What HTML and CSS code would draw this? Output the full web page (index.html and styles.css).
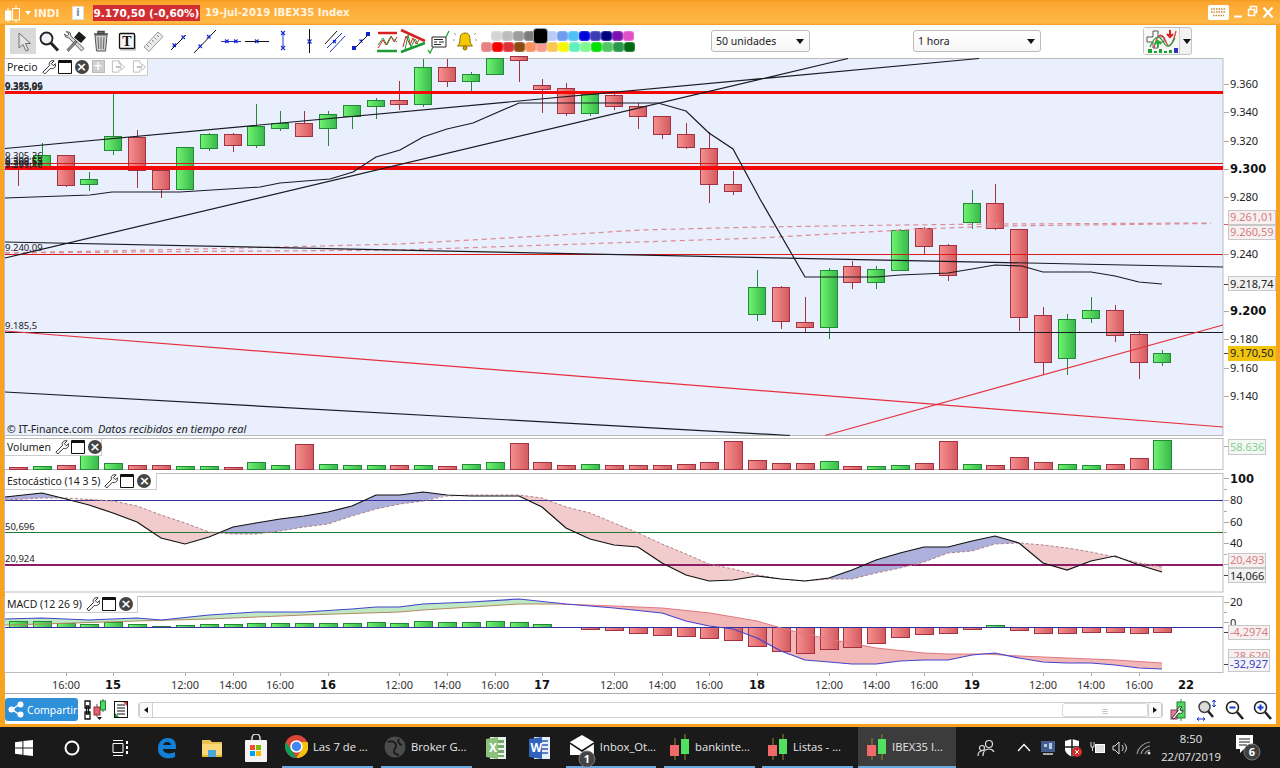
FILE: index.html
```html
<!DOCTYPE html>
<html lang="es">
<head>
<meta charset="utf-8">
<title>IBEX35 Index</title>
<link rel="stylesheet" href="styles.css">
</head>
<body>
<svg class="defs" width="0" height="0" aria-hidden="true">
  <defs>
    <linearGradient id="gu"><stop offset="0" stop-color="#70f470"/><stop offset="1" stop-color="#38b84c"/></linearGradient>
    <linearGradient id="gd"><stop offset="0" stop-color="#f69090"/><stop offset="1" stop-color="#d45a5e"/></linearGradient>
    <symbol id="tcandle" viewBox="0 0 20 26">
      <path d="M5 4v24M15 0v26" stroke="#8a8a30" stroke-width="1" fill="none"/>
      <rect x="0" y="11" width="9" height="11" fill="#f06a6a"/>
      <rect x="11" y="5" width="8" height="15" fill="#52e060"/>
    </symbol>
  </defs>
</svg>
<div class="window">
  <header class="titlebar">
    <svg class="ti-logo" width="16" height="18" viewBox="0 0 16 18"><path d="M0 6h6v9H0zM11 0v3M11 15v3M3 3v3M3 15v2" fill="#fff" stroke="#fff"/><rect x="7.5" y="3.5" width="7" height="11.500" fill="none" stroke="#fff"/></svg>
    <span class="ti-caret"></span>
    <span class="ti-name">INDI</span>
    <span class="ti-info">i</span>
    <span class="ti-price">9.170,50 (-0,60%)</span>
    <span class="ti-text">19-jul-2019 IBEX35 Index</span>
    <span class="ti-right">
      <svg width="21" height="15" viewBox="0 0 21 15"><rect width="21" height="15" rx="2" fill="#fff"/><path d="M3 4h15M3 7h15M5 10.500h11" stroke="#c98a30" stroke-width="1.500" stroke-dasharray="1.500 1"/></svg>
      <svg width="10" height="15" viewBox="0 0 10 15"><path d="M1 11.500h8" stroke="#fff" stroke-width="2"/></svg>
      <svg width="11" height="15" viewBox="0 0 11 15"><path d="M3.500 4.500V1.500h6v6H7M1.500 4.500h6v6h-6z" fill="none" stroke="#fff" stroke-width="1.500"/></svg>
      <svg width="12" height="15" viewBox="0 0 12 15"><path d="M1.500 2.500l9 10M10.500 2.500l-9 10" stroke="#fff" stroke-width="2.200"/></svg>
    </span>
  </header>

  <nav class="toolbar">
    <span class="tool sel"><svg viewBox="0 0 26 26"><path d="M9 5v15l4-3.500 3 6.500 2.500-1-3-6.500h5z" fill="#e4e4e4" stroke="#6f6f6f"/></svg></span>
    <span class="tool"><svg viewBox="0 0 26 26"><circle cx="10.500" cy="10.500" r="6" fill="#eef2f8" stroke="#222" stroke-width="1.800"/><path d="M15 15l7 7.500" stroke="#222" stroke-width="3"/></svg></span>
    <span class="tool"><svg viewBox="0 0 26 26"><path d="M4 3.500l4 1 1 3.500 13 12.500-2.500 2.500L7 10l-3.500-1-1-3 2.500 2 2-2z" fill="#d8d8d8" stroke="#555" stroke-width=".9"/><path d="M5 21.500l8.500-9 1.500 1.500-8.500 9.500z" fill="#8a8a8a" stroke="#444" stroke-width=".7"/><path d="M12 9.500l5-6 7 6-5 5.500z" fill="#1c1c1c"/></svg></span>
    <span class="tool"><svg viewBox="0 0 26 26"><path d="M7 7h12l-1.500 16h-9z" fill="#d0d0d0" stroke="#555"/><path d="M6 6h14M10 3.500h6v2h-6z" stroke="#444" stroke-width="1.500" fill="#999"/><path d="M10 9l.7 12M13 9v12M16 9l-.7 12" stroke="#666"/></svg></span>
    <span class="tool"><svg viewBox="0 0 26 26"><rect x="5.500" y="5.500" width="15" height="15" rx="1" fill="#f6f6f6" stroke="#111" stroke-width="1.300"/><path d="M21.500 7v15h-15" fill="none" stroke="#aaa"/><text class="ti-t" x="13" y="18">T</text></svg></span>
    <span class="tool"><svg viewBox="0 0 26 26"><path d="M4 19L18 4l5 4.500L9 23.500z" fill="#ececec" stroke="#999"/><path d="M7 17l2 2M9.500 14.500l2 2M12 12l2 2M14.500 9.500l2 2M17 7l2 2" stroke="#888"/></svg></span>
    <span class="tool"><svg viewBox="0 0 26 26"><path d="M5 22L20 7" stroke="#111"/><path class="bx" d="M6.500 15.500l3.500 3.500M10 15.500L6.500 19M15.500 7.500l3.500 3.500M19 7.500L15.500 11"/></svg></span>
    <span class="tool"><svg viewBox="0 0 26 26"><path d="M2 25L24 2" stroke="#111"/><path class="bx" d="M6.500 16.500l3.500 3.500M10 16.500L6.500 20M15 7l3.500 3.500M18.500 7L15 10.500"/></svg></span>
    <span class="tool"><svg viewBox="0 0 26 26"><path d="M3 13.500h20" stroke="#2233cc"/><path class="bx" d="M7 11.500l3.500 3.500M10.500 11.500L7 15M16 11.500l3.500 3.500M19.500 11.500L16 15"/></svg></span>
    <span class="tool"><svg viewBox="0 0 26 26"><path d="M1 13.500h24" stroke="#111"/><path class="bx" d="M11 11.500l3.500 3.500M14.500 11.500L11 15"/></svg></span>
    <span class="tool"><svg viewBox="0 0 26 26"><path d="M13 6v14" stroke="#2233cc"/><path class="bx" d="M11 3l4 4M15 3l-4 4M11 18l4 4M15 18l-4 4"/></svg></span>
    <span class="tool"><svg viewBox="0 0 26 26"><path d="M13.500 1v24" stroke="#111"/><path class="bx" d="M11.500 11.500l4 4M15.500 11.500l-4 4"/></svg></span>
    <span class="tool"><svg viewBox="0 0 26 26"><path d="M3 16L15 3" stroke="#111"/><path d="M8 24L23 8M5 20L20 5" stroke="#2233cc"/><path class="bx" d="M11 12l3 3M14 12l-3 3"/></svg></span>
    <span class="tool"><svg viewBox="0 0 26 26"><path d="M7 20L20 7" stroke="#111"/><rect x="4" y="18" width="4" height="4" fill="#1122cc"/><rect x="18" y="4" width="4" height="4" fill="#1122cc"/><path class="bx" d="M11.500 11.500l3 3M14.500 11.500l-3 3"/></svg></span>
    <span class="tool"><svg viewBox="0 0 26 26"><path d="M4 5h19" stroke="#d82020" stroke-width="2.500"/><path d="M3 23h20" stroke="#1c9a34" stroke-width="2.500"/><path d="M4 20l5-8 3 5 5-9 3 6 3-5" fill="none" stroke="#d82020"/><path d="M4 17l5-7 4 7 4-8 6 5" fill="none" stroke="#1c9a34"/></svg></span>
    <span class="tool"><svg viewBox="0 0 26 26"><path d="M1 2l24 11" stroke="#d82020" stroke-width="2.500"/><path d="M1 24l24-9" stroke="#1c9a34" stroke-width="2.500"/><path d="M3 19l3-11 4 9 3-7 3 6 3-4" fill="none" stroke="#d82020"/><path d="M5 22l3-15 3 12 4-8 3 5" fill="none" stroke="#1c9a34"/></svg></span>
    <span class="tool"><svg viewBox="0 0 26 26"><path d="M6 9h14v10H6z" fill="#fff" stroke="#222"/><path d="M8 11.500h9M8 14h3M13 14h5M8 16.500h7" stroke="#222"/><path d="M2 22l2 3 3-6M20 9l3-6" fill="none" stroke="#22a030" stroke-width="1.300"/></svg></span>
    <span class="tool"><svg viewBox="0 0 26 26"><path d="M13 5c-4 0-5 3-5 7 0 3-1 4-2.500 6h15c-1.500-2-2.500-3-2.500-6 0-4-1-7-5-7z" fill="#f5c800" stroke="#8a7000"/><circle cx="13" cy="20" r="2" fill="#d8a000" stroke="#8a7000"/><path d="M4 7l-2-2M22 7l2-2M3 12H1M23 12h2" stroke="#999"/></svg></span>

    <div class="palette">
      <div class="pal-row pal-top">
        <i class="c1"></i><i class="c2"></i><i class="c3"></i><i class="c4"></i><i class="c5"></i><i class="c6"></i><i class="c7"></i><i class="c8"></i><i class="c9"></i><i class="c10"></i><i class="c11"></i><i class="c12"></i><i class="c13"></i>
      </div>
      <div class="pal-row">
        <i class="d1"></i><i class="d2"></i><i class="d3"></i><i class="d4"></i><i class="d5"></i><i class="d6"></i><i class="d7"></i><i class="d8"></i><i class="d9"></i><i class="d10"></i><i class="d11"></i><i class="d12"></i><i class="d13"></i><i class="d14"></i>
      </div>
    </div>

    <span class="select sel-units">50 unidades<b></b></span>
    <span class="select sel-time">1 hora<b></b></span>
    <span class="indic-btn">
      <svg width="35" height="26" viewBox="0 0 35 26"><path d="M3 9h6V3h5v6h6v5h-6v6H9v-6H3z" fill="#fff" stroke="#555"/><path d="M10 20c4-18 9-14 12-6s7 2 10-11" fill="none" stroke="#d84040" stroke-width="1.300"/><path d="M6 19C12 5 16 8 20 15s8 1 11-5" fill="none" stroke="#30a040" stroke-width="1.300"/><path d="M14 19v-5M11 16l3-3 3 3" stroke="#18b030" stroke-width="2" fill="none"/><path d="M26 2v6M23 6l3 3 3-3" stroke="#d82020" stroke-width="2" fill="none"/><path d="M4 21h4v4H4zM10 23h3v2h-3zM15 21h3v4h-3zM20 23h3v2h-3zM25 22h3v3h-3z" fill="#18a030"/><path d="M30 20h4v5h-4z" fill="#3030c0"/></svg>
      <b></b>
    </span>
  </nav>

  <div class="panes">
    <svg class="pane" width="1271" height="378" viewBox="5 58 1271 378">
      <rect class="plot" x="4.500" y="58.500" width="1218.500" height="377"/>
      <path class="wick-d" d="M18.500 167v19M66.500 155v32M137.500 130v58M161.500 170v28M233.500 133v19M304.500 111v25M399.500 81v29M447.500 59v28M519.500 59v23M542.500 79v34M566.500 83v33M614.500 93v17M638.500 103v26M662.500 116v23M686.500 123v26M709.500 132v71M733.500 171v24M781.500 286v43M805.500 297v35M852.500 261v28M924.500 227v27M948.500 244v37M995.500 184v46M1019.500 229v102M1043.500 307v68M1115.500 305v37M1139.500 331v48"/>
      <path class="wick-u" d="M42.500 143v23M89.500 172v19M113.500 93v62M185.500 147v43M209.500 133v18M256.500 104v44M280.500 111v20M328.500 111v35M352.500 105v24M376.500 98v21M423.500 59v48M471.500 72v19M495.500 59v15M590.500 94v22M757.500 270v51M829.500 268v71M876.500 266v23M900.500 229v41M972.500 190v39M1067.500 314v61M1091.500 297v26M1162.500 350v16"/>
      <g class="bars up" fill="url(#gu)">
        <rect x="33.500" y="155.500" width="17" height="11"/><rect x="80.500" y="179.500" width="17" height="5"/><rect x="104.500" y="136.500" width="17" height="14"/><rect x="176.500" y="147.500" width="17" height="42"/><rect x="200.500" y="134.500" width="17" height="14"/><rect x="247.500" y="126.500" width="17" height="19"/><rect x="271.500" y="123.500" width="17" height="5"/><rect x="319.500" y="114.500" width="17" height="14"/><rect x="343.500" y="105.500" width="17" height="11"/><rect x="367.500" y="100.500" width="17" height="6"/><rect x="414.500" y="67.500" width="17" height="37"/><rect x="462.500" y="74.500" width="17" height="7"/><rect x="486.500" y="58.500" width="17" height="16"/><rect x="581.500" y="94.500" width="17" height="19"/><rect x="748.500" y="287.500" width="17" height="27"/><rect x="820.500" y="270.500" width="17" height="57"/><rect x="867.500" y="269.500" width="17" height="13"/><rect x="891.500" y="230.500" width="17" height="40"/><rect x="963.500" y="203.500" width="17" height="19"/><rect x="1058.500" y="319.500" width="17" height="39"/><rect x="1082.500" y="310.500" width="17" height="8"/><rect x="1153.500" y="353.500" width="17" height="9"/>
      </g>
      <g class="bars dn" fill="url(#gd)">
        <rect x="57.500" y="155.500" width="17" height="30"/><rect x="128.500" y="137.500" width="17" height="33"/><rect x="152.500" y="170.500" width="17" height="19"/><rect x="224.500" y="134.500" width="17" height="11"/><rect x="295.500" y="123.500" width="17" height="13"/><rect x="390.500" y="100.500" width="17" height="4"/><rect x="438.500" y="67.500" width="17" height="14"/><rect x="510.500" y="56.500" width="17" height="4"/><rect x="533.500" y="85.500" width="17" height="4"/><rect x="557.500" y="88.500" width="17" height="25"/><rect x="605.500" y="95.500" width="17" height="11"/><rect x="629.500" y="106.500" width="17" height="10"/><rect x="653.500" y="116.500" width="17" height="18"/><rect x="677.500" y="134.500" width="17" height="13"/><rect x="700.500" y="148.500" width="17" height="36"/><rect x="724.500" y="184.500" width="17" height="7"/><rect x="772.500" y="287.500" width="17" height="34"/><rect x="796.500" y="322.500" width="17" height="5"/><rect x="843.500" y="266.500" width="17" height="16"/><rect x="915.500" y="228.500" width="17" height="18"/><rect x="939.500" y="245.500" width="17" height="30"/><rect x="986.500" y="203.500" width="17" height="25"/><rect x="1010.500" y="229.500" width="17" height="88"/><rect x="1034.500" y="315.500" width="17" height="47"/><rect x="1106.500" y="310.500" width="17" height="25"/><rect x="1130.500" y="334.500" width="17" height="28"/>
      </g>
      <path class="dash" d="M5 253L200 249 400 244 560 235 640 230 760 227 900 225 1000 224 1211 223"/>
      <path class="dash" d="M5 253L400 250 760 238 920 229 1000 226 1211 223.500"/>
      <path class="thin-red" d="M5 163h1218M5 254.500h1218"/>
      <path class="red-thick r3" d="M5 92.500h1218"/>
      <path class="red-thick r4" d="M5 167.500h1218"/>
      <path class="thin-blk crisp" d="M5 332.500h1218"/>
      <path class="thin-blk" d="M5 148.500L979 58.500M5 258L848 58.500M5 242L1223 267M5 392L790 435.500"/>
      <path class="thin-blk" d="M5 198L90 195 112 192 180 192 260 187 280 183 330 179 353 172 376 157 400 150 423 137 447 129 473 123 519 103 590 103 658 103 686 111 709 133 733 149 760 199 805 277 876 277 900 275 948 273 972 269 995 265 1022 266 1043 272 1091 272 1115 276 1139 282 1162 284"/>
      <path class="thin-red2" d="M5 331L1223 427M825 435.500L1223 325"/>
      <text class="lb" x="5" y="90">9.353,89</text><text class="lb" x="5" y="89">9.385,06</text><text class="lb" x="5" y="90">9.315,95</text>
      <text class="lb" x="5" y="159">9.305,26</text>
      <text class="lb" x="5" y="164">9.300,55</text><text class="lb" x="5" y="165">9.298,62</text><text class="lb" x="5" y="167">9.301,17</text><text class="lb" x="5" y="168">9.299,40</text>
      <text class="lb" x="5" y="251">9.240,09</text>
      <text class="lb" x="5" y="329">9.185,5</text>
      <text class="ft" x="7" y="433">© IT-Finance.com</text><text class="ft it" x="98" y="433">Datos recibidos en tiempo real</text>
      <path class="tk" d="M1224 84.500h5M1224 112.500h5M1224 141.500h5M1224 169.500h5M1224 197.500h5M1224 254.500h5M1224 311.500h5M1224 339.500h5M1224 368.500h5M1224 396.500h5"/>
      <path class="tk-red" d="M1224 224.500h4"/><path class="tk-dk" d="M1224 284.500h4M1224 353.500h4"/>
      <text class="ax" x="1230" y="88">9.360</text><text class="ax" x="1230" y="116">9.340</text><text class="ax" x="1230" y="145">9.320</text><text class="ax-b" x="1230" y="173">9.300</text><text class="ax" x="1230" y="201">9.280</text><text class="ax" x="1230" y="258">9.240</text><text class="ax-b" x="1230" y="315">9.200</text><text class="ax" x="1230" y="343">9.180</text><text class="ax" x="1230" y="372">9.160</text><text class="ax" x="1230" y="400">9.140</text>
      <rect class="box-r" x="1228.500" y="210.500" width="47" height="14"/><text class="ax rd" x="1230" y="221">9.261,01</text>
      <rect class="box-r" x="1228.500" y="225.500" width="47" height="14"/><text class="ax rd" x="1230" y="236">9.260,59</text>
      <rect class="box-g" x="1228.500" y="276.500" width="47" height="14"/><text class="ax" x="1230" y="288">9.218,74</text>
      <rect class="box-y" x="1228" y="346" width="48" height="15"/><text class="ax" x="1230" y="357">9.170,50</text>
    </svg>

    <svg class="pane" width="1271" height="33" viewBox="5 438 1271 33">
      <rect class="plot white" x="4.500" y="438.500" width="1218.500" height="31"/>
      <g class="bars up" fill="url(#gu)"><rect x="33.500" y="466.500" width="18" height="3"/><rect x="80.500" y="454.500" width="18" height="15"/><rect x="104.500" y="463.500" width="18" height="6"/><rect x="176.500" y="466.500" width="18" height="3"/><rect x="200.500" y="466.500" width="18" height="3"/><rect x="247.500" y="462.500" width="18" height="7"/><rect x="271.500" y="465.500" width="18" height="4"/><rect x="319.500" y="464.500" width="18" height="5"/><rect x="343.500" y="465.500" width="18" height="4"/><rect x="367.500" y="465.500" width="18" height="4"/><rect x="414.500" y="465.500" width="18" height="4"/><rect x="462.500" y="464.500" width="18" height="5"/><rect x="486.500" y="462.500" width="18" height="7"/><rect x="581.500" y="464.500" width="18" height="5"/><rect x="820.500" y="461.500" width="18" height="8"/><rect x="867.500" y="466.500" width="18" height="3"/><rect x="891.500" y="465.500" width="18" height="4"/><rect x="963.500" y="464.500" width="18" height="5"/><rect x="1058.500" y="464.500" width="18" height="5"/><rect x="1082.500" y="465.500" width="18" height="4"/><rect x="1153.500" y="440.500" width="18" height="29"/></g>
      <g class="bars dn" fill="url(#gd)"><rect x="9.500" y="467.500" width="18" height="2"/><rect x="57.500" y="465.500" width="18" height="4"/><rect x="128.500" y="465.500" width="18" height="4"/><rect x="152.500" y="465.500" width="18" height="4"/><rect x="224.500" y="467.500" width="18" height="2"/><rect x="295.500" y="444.500" width="18" height="25"/><rect x="390.500" y="465.500" width="18" height="4"/><rect x="438.500" y="466.500" width="18" height="3"/><rect x="510.500" y="443.500" width="18" height="26"/><rect x="533.500" y="462.500" width="18" height="7"/><rect x="557.500" y="465.500" width="18" height="4"/><rect x="605.500" y="465.500" width="18" height="4"/><rect x="629.500" y="465.500" width="18" height="4"/><rect x="653.500" y="465.500" width="18" height="4"/><rect x="677.500" y="464.500" width="18" height="5"/><rect x="700.500" y="462.500" width="18" height="7"/><rect x="724.500" y="441.500" width="18" height="28"/><rect x="748.500" y="460.500" width="18" height="9"/><rect x="772.500" y="463.500" width="18" height="6"/><rect x="796.500" y="463.500" width="18" height="6"/><rect x="843.500" y="466.500" width="18" height="3"/><rect x="915.500" y="463.500" width="18" height="6"/><rect x="939.500" y="441.500" width="18" height="28"/><rect x="986.500" y="465.500" width="18" height="4"/><rect x="1010.500" y="457.500" width="18" height="12"/><rect x="1034.500" y="462.500" width="18" height="7"/><rect x="1106.500" y="464.500" width="18" height="5"/><rect x="1130.500" y="458.500" width="18" height="11"/></g>
      <path class="tk" d="M1224 446.500h5"/>
      <rect class="box-gr" x="1228.500" y="439.500" width="37" height="15"/><text class="ax gn" x="1230" y="451">58.636</text>
    </svg>

    <svg class="pane" width="1271" height="120" viewBox="5 473 1271 120">
      <rect class="plot white" x="4.500" y="473.500" width="1218.500" height="118.500"/>
      <polygon class="f-blue" points="5,497 42,493 66,499 72,500 66,498 42,498 5,500"/>
      <polygon class="f-pink" points="70,500 89,505 113,513 137,522 161,538 185,544 209,537 220,533 209,532 185,523 161,515 137,506 113,501 89,499"/>
      <polygon class="f-blue" points="220,533 233,527 256,523 280,519 304,516 328,512 352,506 376,495 400,495 423,492 447,495 423,501 400,504 376,509 352,516 328,524 304,527 280,531 256,534 233,534"/>
      <polygon class="f-pink" points="519,496 542,507 566,528 590,539 614,545 638,547 662,563 686,575 709,581 733,580 757,576 781,579 805,581 781,579 757,575 733,569 709,564 686,554 662,544 638,533 614,523 590,513 566,507 542,498 519,495"/>
      <polygon class="f-blue" points="805,581 829,578 852,570 876,560 900,553 924,547 948,547 972,541 995,536 1019,543 995,544 972,551 948,553 924,562 900,568 876,573 852,579 829,579"/>
      <polygon class="f-pink" points="1019,543 1043,563 1067,570 1091,561 1115,556 1139,565 1162,572 1162,567 1139,563 1115,557 1091,552 1067,548 1043,545"/>
      <path class="h-blue" d="M5 500.500h1218"/><path class="h-green" d="M5 532.500h1218"/><path class="h-purple" d="M5 565h1218"/>
      <path class="d-line" d="M5 500L42 498 66 498 113 501 137 506 161 515 185 523 209 532 233 534 256 534 280 531 304 527 328 524 352 516 376 509 400 504 423 501 447 496 471 495 519 495 542 498 566 507 590 513 614 523 638 533 662 544 686 554 709 564 733 569 757 575 781 579 805 581 829 579 852 579 876 573 900 568 924 562 948 553 972 551 995 544 1019 543 1043 545 1067 548 1091 552 1115 557 1139 563 1162 567"/>
      <path class="k-line" d="M5 497L42 493 66 499 89 505 113 513 137 522 161 538 185 544 209 537 233 527 256 523 280 519 304 516 328 512 352 506 376 495 400 495 423 492 447 495 471 496 519 496 542 507 566 528 590 539 614 545 638 547 662 563 686 575 709 581 733 580 757 576 781 579 805 581 829 578 852 570 876 560 900 553 924 547 948 547 972 541 995 536 1019 543 1043 563 1067 570 1091 561 1115 556 1139 565 1162 572"/>
      <text class="lb" x="5" y="530">50,696</text><text class="lb" x="5" y="562">20,924</text>
      <path class="tk" d="M1224 478.500h5M1224 489.500h3M1224 500.500h5M1224 511.500h3M1224 522.500h5M1224 532.500h3M1224 543.500h5M1224 554.500h3M1224 564.500h5"/>
      <path class="tk-dk" d="M1224 575.500h4"/>
      <text class="ax-b" x="1230" y="483">100</text><text class="ax" x="1230" y="504">80</text><text class="ax" x="1230" y="526">60</text><text class="ax" x="1230" y="547">40</text>
      <rect class="box-r" x="1228.500" y="553.500" width="37" height="14"/><text class="ax rd" x="1230" y="564">20,493</text>
      <rect class="box-g" x="1228.500" y="568.500" width="37" height="14"/><text class="ax" x="1230" y="580">14,066</text>
    </svg>

    <svg class="pane" width="1271" height="77" viewBox="5 596 1271 77">
      <rect class="plot white" x="4.500" y="596.500" width="1218.500" height="76"/>
      <polygon class="f-green" points="5,619 42,618 89,620 137,618 161,620 209,615 256,612 304,612 352,609 376,607 399,607 423,604 471,602 519,599 560,604 519,604 423,610 399,612 304,615 209,619 137,621 42,624 5,625"/>
      <polygon class="f-salmon" points="560,604 614,606 662,608 710,613 757,621 781,628 805,634 829,639 876,648 924,653 948,654 985,654 1019,656 1043,657 1115,660 1162,663 1162,669 1139,668 1115,665 1091,663 1067,663 1043,662 1019,658 995,653 972,655 948,660 924,660 900,661 876,664 852,664 829,662 805,660 781,651 757,638 733,629 709,626 686,621 662,613 614,608 566,604"/>
      <g class="bars up" fill="url(#gu)"><rect x="9.500" y="621.500" width="18" height="6"/><rect x="33.500" y="621.500" width="18" height="6"/><rect x="57.500" y="623.500" width="18" height="4"/><rect x="80.500" y="624.500" width="18" height="3"/><rect x="104.500" y="622.500" width="18" height="5"/><rect x="128.500" y="624.500" width="18" height="3"/><rect x="152.500" y="626.500" width="18" height="1"/><rect x="176.500" y="625.500" width="18" height="2"/><rect x="200.500" y="624.500" width="18" height="3"/><rect x="224.500" y="624.500" width="18" height="3"/><rect x="247.500" y="623.500" width="18" height="4"/><rect x="271.500" y="623.500" width="18" height="4"/><rect x="295.500" y="623.500" width="18" height="4"/><rect x="319.500" y="623.500" width="18" height="4"/><rect x="343.500" y="623.500" width="18" height="4"/><rect x="367.500" y="622.500" width="18" height="5"/><rect x="390.500" y="623.500" width="18" height="4"/><rect x="414.500" y="621.500" width="18" height="6"/><rect x="438.500" y="622.500" width="18" height="5"/><rect x="462.500" y="622.500" width="18" height="5"/><rect x="486.500" y="621.500" width="18" height="6"/><rect x="510.500" y="622.500" width="18" height="5"/><rect x="533.500" y="624.500" width="18" height="3"/><rect x="986.500" y="625.500" width="18" height="2"/></g>
      <g class="bars dn" fill="url(#gd)"><rect x="581.500" y="627.500" width="18" height="2"/><rect x="605.500" y="627.500" width="18" height="3"/><rect x="629.500" y="627.500" width="18" height="6"/><rect x="653.500" y="627.500" width="18" height="8"/><rect x="677.500" y="627.500" width="18" height="9"/><rect x="700.500" y="627.500" width="18" height="11"/><rect x="724.500" y="627.500" width="18" height="13"/><rect x="748.500" y="627.500" width="18" height="19"/><rect x="772.500" y="627.500" width="18" height="24"/><rect x="796.500" y="627.500" width="18" height="26"/><rect x="820.500" y="627.500" width="18" height="22"/><rect x="843.500" y="627.500" width="18" height="20"/><rect x="867.500" y="627.500" width="18" height="16"/><rect x="891.500" y="627.500" width="18" height="10"/><rect x="915.500" y="627.500" width="18" height="7"/><rect x="939.500" y="627.500" width="18" height="6"/><rect x="963.500" y="627.500" width="18" height="2"/><rect x="1010.500" y="627.500" width="18" height="3"/><rect x="1034.500" y="627.500" width="18" height="6"/><rect x="1058.500" y="627.500" width="18" height="6"/><rect x="1082.500" y="627.500" width="18" height="5"/><rect x="1106.500" y="627.500" width="18" height="5"/><rect x="1130.500" y="627.500" width="18" height="6"/><rect x="1153.500" y="627.500" width="18" height="5"/></g>
      <path class="h-blue" d="M5 627.500h1218"/>
      <path class="sig" d="M5 625L42 624 137 621 209 619 304 615 399 612 423 610 519 604 560 604"/>
      <path class="sig2" d="M560 604L614 606 662 608 710 613 757 621 781 628 805 634 829 639 876 648 924 653 948 654 985 654 1019 656 1043 657 1115 660 1162 663"/>
      <path class="macd" d="M5 619L42 618 89 620 137 618 161 620 209 615 256 612 304 612 352 609 376 607 399 607 423 604 471 602 519 599 566 604 614 608 662 613 686 621 709 626 733 629 757 638 781 651 805 660 829 662 852 664 876 664 900 661 924 660 948 660 972 655 995 653 1019 658 1043 662 1067 663 1091 663 1115 665 1139 668 1162 669"/>
      <path class="tk" d="M1224 602.500h5M1224 612.500h3M1224 622.500h5"/>
      <path class="tk-dk" d="M1224 632.500h4M1224 664.500h4"/>
      <text class="ax" x="1230" y="606">20</text><text class="ax" x="1230" y="627">0</text>
      <rect class="box-r" x="1228.500" y="625.500" width="41" height="14"/><text class="ax rd" x="1230" y="636">-4,2974</text>
      <rect class="box-r" x="1228.500" y="649.500" width="41" height="14"/><text class="ax rd" x="1230" y="660">-28,620</text>
      <rect class="box-b" x="1228.500" y="657.500" width="41" height="14"/><text class="ax bl" x="1230" y="668">-32,927</text>
    </svg>

    <svg class="pane" width="1271" height="21" viewBox="5 673 1271 21">
      <path class="tk" d="M66.500 673v3M113.500 673v3M185.500 673v3M233.500 673v3M280.500 673v3M328.500 673v3M399.500 673v3M447.500 673v3M495.500 673v3M542.500 673v3M614.500 673v3M662.500 673v3M709.500 673v3M757.500 673v3M829.500 673v3M876.500 673v3M924.500 673v3M972.500 673v3M1043.500 673v3M1091.500 673v3M1139.500 673v3"/>
      <path class="tk" d="M5 693.500h1271"/>
      <g class="tm"><text x="66" y="689">16:00</text><text x="185" y="689">12:00</text><text x="233" y="689">14:00</text><text x="280" y="689">16:00</text><text x="399" y="689">12:00</text><text x="447" y="689">14:00</text><text x="495" y="689">16:00</text><text x="614" y="689">12:00</text><text x="662" y="689">14:00</text><text x="709" y="689">16:00</text><text x="829" y="689">12:00</text><text x="876" y="689">14:00</text><text x="924" y="689">16:00</text><text x="1043" y="689">12:00</text><text x="1091" y="689">14:00</text><text x="1139" y="689">16:00</text></g>
      <g class="tmb"><text x="113" y="689">15</text><text x="328" y="689">16</text><text x="542" y="689">17</text><text x="757" y="689">18</text><text x="972" y="689">19</text><text x="1186" y="689">22</text></g>
    </svg>

    <div class="overlays">
      <div class="plabel pl-price">Precio
        <svg class="wr" viewBox="0 0 16 16"><path d="M2 14l7-7c-1-3 1-6 5-5l-3 3 2 2 3-2c0 4-3 6-6 5l-6 6z" fill="#fff" stroke="#222"/></svg>
        <span class="win"></span><span class="cl">×</span>
        <span class="gr">+</span>
        <svg class="gp" viewBox="0 0 16 16"><path d="M2 2h7v3h2L9 2M2 2v12h7v-3M6 8h5V5l4 3.500-4 3.500V9H6z" fill="#fff" stroke="#bbb"/></svg>
        <svg class="gp" viewBox="0 0 16 16"><path d="M2 2h7v3M2 2v12h7v-3M6 8h5V5l4 3.500-4 3.500V9H6z" fill="#fff" stroke="#bbb"/></svg>
      </div>
      <div class="plabel pl-vol">Volumen
        <svg class="wr" viewBox="0 0 16 16"><path d="M2 14l7-7c-1-3 1-6 5-5l-3 3 2 2 3-2c0 4-3 6-6 5l-6 6z" fill="#fff" stroke="#222"/></svg>
        <span class="win"></span><span class="cl">×</span>
      </div>
      <div class="plabel pl-sto">Estocástico (14 3 5)
        <svg class="wr" viewBox="0 0 16 16"><path d="M2 14l7-7c-1-3 1-6 5-5l-3 3 2 2 3-2c0 4-3 6-6 5l-6 6z" fill="#fff" stroke="#222"/></svg>
        <span class="win"></span><span class="cl">×</span>
      </div>
      <div class="plabel pl-mac">MACD (12 26 9)
        <svg class="wr" viewBox="0 0 16 16"><path d="M2 14l7-7c-1-3 1-6 5-5l-3 3 2 2 3-2c0 4-3 6-6 5l-6 6z" fill="#fff" stroke="#222"/></svg>
        <span class="win"></span><span class="cl">×</span>
      </div>
    </div>
  </div>

  <footer class="footer">
    <span class="share">
      <svg width="16" height="17" viewBox="0 0 16 17"><path d="M12 3L4 8.500 12 14" fill="none" stroke="#fff" stroke-width="1.500"/><circle cx="12.500" cy="3.500" r="3" fill="#fff"/><circle cx="3.500" cy="8.500" r="3" fill="#fff"/><circle cx="12.500" cy="13.500" r="3" fill="#fff"/></svg>
      Compartir
    </span>
    <svg class="fi-link" width="24" height="22" viewBox="0 0 24 22"><path d="M3 2h5v7H3zM3 13h5v7H3zM4.500 7h2v8h-2z" fill="#fff" stroke="#111" stroke-width="1.300"/><path d="M15 5v13M21 0v13" stroke="#555"/><rect x="12" y="8" width="6" height="8" fill="#e06070" stroke="#903030"/><rect x="18.500" y="2" width="5" height="9" fill="#50d860" stroke="#208030"/><path d="M15 18h5l-2.500 3z" fill="#111"/></svg>
    <svg class="fi-doc" width="16" height="17" viewBox="0 0 16 17"><rect x=".5" y=".5" width="13" height="16" fill="#fff" stroke="#111"/><path d="M3 4h8M3 7h8M3 10h8M3 13h8" stroke="#111"/><path d="M9 1l4 0 0 4z" fill="#d84040"/><path d="M1 16v-4l4 4z" fill="#209040"/></svg>
    <div class="scroll">
      <span class="sb-btn"><i class="tri-l"></i></span>
      <span class="sb-track"></span>
      <span class="sb-thumb"><i>≡</i></span>
      <span class="sb-btn"><i class="tri-r"></i></span>
    </div>
    <svg class="fi-c" width="16" height="22" viewBox="0 0 16 22"><path d="M11 0v22" stroke="#20a030"/><rect x="7" y="3" width="8" height="16" fill="#50d860" stroke="#208030"/><rect x="1" y="11" width="6" height="9" fill="#e08090" stroke="#804060"/><path d="M2 19l6-7c-1-3 1-5 4-4l-2 2 1 2 2-1c0 3-2 4-4 3l-5 6z" fill="#fff" stroke="#333"/></svg>
    <svg class="fi-m" width="20" height="22" viewBox="0 0 20 22"><circle cx="7.500" cy="8" r="5.500" fill="#dcdcdc" stroke="#444" stroke-width="1.500"/><path d="M11 12l5 6" stroke="#222" stroke-width="2.500"/><path d="M17 1v7M15.300 3L17 1l1.700 2M15.300 6L17 8l1.700-2M0 20h8M2 18.300L0 20l2 1.700M6 18.300L8 20l-2 1.700" stroke="#1c2ccc" fill="none"/></svg>
    <svg class="fi-z" width="19" height="20" viewBox="0 0 19 20"><circle cx="7.500" cy="7.500" r="6" fill="#fff" stroke="#222" stroke-width="1.600"/><path d="M12 12l6 7" stroke="#222" stroke-width="2.600"/><path d="M4.500 7.500h6" stroke="#1c3cd0" stroke-width="2"/></svg>
    <svg class="fi-z2" width="19" height="20" viewBox="0 0 19 20"><circle cx="7.500" cy="7.500" r="6" fill="#fff" stroke="#222" stroke-width="1.600"/><path d="M12 12l6 7" stroke="#222" stroke-width="2.600"/><path d="M4.500 7.500h6M7.500 4.500v6" stroke="#1c3cd0" stroke-width="2"/></svg>
  </footer>
</div>

<div class="taskbar">
  <span class="tb w48"><svg width="18" height="16" viewBox="0 0 18 16"><path d="M0 2.200L7.400 1.200V7.500H0zM8.400 1L18 0V7.500H8.400zM0 8.500H7.400V14.800L0 13.800zM8.400 8.500H18V16L8.400 15z" fill="#fff"/></svg></span>
  <span class="tb w48"><svg width="16" height="16" viewBox="0 0 16 16"><circle cx="8" cy="8" r="6.500" fill="none" stroke="#fff" stroke-width="2"/></svg></span>
  <span class="tb w48"><svg width="17" height="16" viewBox="0 0 17 16"><path d="M1 .5h10M1 15.500h10M1 3.500h10v9H1z" fill="none" stroke="#fff"/><path d="M14 1h2v3h-2zM14 6h2v3h-2zM14 11h2v3h-2z" fill="#fff"/></svg></span>
  <span class="tb w46"><svg width="20" height="22" viewBox="0 0 20 22"><path d="M1 12C1 5 5 1 11 1c5 0 8 3 8 9v2H6c0 4 6 6 12 3v5c-7 3-17 1-17-8zm5-4h8c0-4-7-4-8 0z" fill="#1280d8"/></svg></span>
  <span class="tb w44"><svg width="20" height="20" viewBox="0 0 20 20"><path d="M0 2h8l2 2h10v3H0z" fill="#e8c050"/><path d="M0 6h20v13H0z" fill="#f8d878"/><path d="M6 12h8v7H6z" fill="#48a8d8"/><path d="M0 17h6v2H0zM14 17h6v2h-6z" fill="#e8b830"/></svg></span>
  <span class="tb w44"><svg width="22" height="28" viewBox="0 0 22 28"><path d="M7 7V4a4 4 0 018 0v3" fill="none" stroke="#ddd" stroke-width="1.500"/><rect y="6" width="22" height="22" rx="1" fill="#f4f4f4"/><path d="M5 11h5v5H5z" fill="#f25022"/><path d="M11 11h5v5h-5z" fill="#7fba00"/><path d="M5 17h5v5H5z" fill="#00a4ef"/><path d="M11 17h5v5h-5z" fill="#ffb900"/></svg></span>

  <span class="task m4 w91">
    <svg width="23" height="23" viewBox="0 0 23 23"><circle cx="11.500" cy="11.500" r="11.500" fill="#db4437"/><path d="M11.500 23A11.500 11.500 0 01.9 7L7 15.500 11.500 23z" fill="#0f9d58"/><path d="M11.500 23l5-8.500V7h6a11.500 11.500 0 01-11 16z" fill="#f4c20d"/><circle cx="11.500" cy="11.500" r="5.500" fill="#4285f4" stroke="#fff" stroke-width="1.500"/></svg>
    <span>Las 7 de ...</span>
  </span>
  <span class="task m8 w91">
    <svg width="22" height="22" viewBox="0 0 22 22"><circle cx="11" cy="11" r="10.500" fill="#4c4c4c"/><path d="M4 6c4-2 7 0 8 3s-3 4-2 7 3 3 5 3M15 3c-2 3 0 5 3 6" fill="none" stroke="#1c1c1c" stroke-width="2"/></svg>
    <span>Broker G...</span>
  </span>
  <span class="tb w44 m2"><svg width="24" height="24" viewBox="0 0 24 24"><path d="M6 1h16v22H6z" fill="#e8f4e8"/><path d="M13 4h7v3h-7zM13 9h7v3h-7zM13 14h7v3h-7zM13 19h7v2h-7z" fill="#70a870"/><path d="M2 3l12-2v22L2 21z" fill="#8cc07c"/><text class="xw" x="5" y="16">X</text></svg></span>
  <span class="tb w44"><svg width="24" height="24" viewBox="0 0 24 24"><path d="M6 1h16v22H6z" fill="#e8eefa"/><path d="M13 4h7v2h-7zM13 8h7v2h-7zM13 12h7v2h-7zM13 16h7v2h-7z" fill="#5c80c8"/><path d="M1 3l13-2v22L1 21z" fill="#2f63bc"/><text class="xw" x="2.500" y="16">W</text></svg></span>
  <span class="task mail m4 w90">
    <svg class="mail-ic" width="30" height="34" viewBox="0 0 30 34"><path d="M1 9L13 2l12 7v13H1z" fill="#fff"/><path d="M1 10l12 8 12-8" fill="none" stroke="#111" stroke-width="1.500"/><circle cx="18" cy="26" r="8" fill="#444" stroke="#777"/><text class="badge" x="18" y="30">1</text></svg>
    <span>Inbox_Ot...</span>
  </span>
  <span class="task m8 w91"><svg class="tc" width="20" height="26"><use href="#tcandle"/></svg><span>bankinte...</span></span>
  <span class="task m7 w91"><svg class="tc" width="20" height="26"><use href="#tcandle"/></svg><span>Listas - ...</span></span>
  <span class="task active m5 w98"><svg class="tc" width="20" height="26"><use href="#tcandle"/></svg><span>IBEX35 I...</span></span>

  <span class="tray people"><svg width="20" height="18" viewBox="0 0 20 18"><circle cx="12" cy="5" r="3.500" fill="none" stroke="#ddd" stroke-width="1.200"/><path d="M6 17c0-5 2-7 6-7 2 0 4 1 5 3" fill="none" stroke="#ddd" stroke-width="1.200"/><circle cx="5" cy="9" r="2.500" fill="none" stroke="#ddd" stroke-width="1.200"/><path d="M1 17c0-3 1-5 4-5" fill="none" stroke="#ddd" stroke-width="1.200"/></svg></span>
  <span class="tray w24 ml6"><svg width="14" height="9" viewBox="0 0 14 9"><path d="M1 8l6-6.500L13 8" fill="none" stroke="#fff" stroke-width="1.300"/></svg></span>
  <span class="tray w24"><svg width="14" height="14" viewBox="0 0 14 14"><rect width="14" height="11" fill="#445e90"/><path d="M3 3h3v3H3zM8 2h3v6H8z" fill="#b4c8e8"/><path d="M2 12h10v2H2z" fill="#aaa"/></svg></span>
  <span class="tray w26"><svg width="18" height="18" viewBox="0 0 18 18"><path d="M1 2l7-2 7 2v8c0 4-4 6-7 8-3-2-7-4-7-8z" fill="#fff"/><path d="M8 0v18M1 8h14" stroke="#1c1c1c" stroke-width="1.500"/><circle cx="13" cy="13" r="5" fill="#d82c2c"/><path d="M11 11l4 4M15 11l-4 4" stroke="#fff"/></svg></span>
  <span class="tray w22"><svg width="15" height="13" viewBox="0 0 15 13"><path d="M1 1v5h3V1M2.500 6v4" fill="none" stroke="#ddd"/><rect x="5.500" y="3.500" width="9" height="8" fill="#ddd" stroke="#fff"/></svg></span>
  <span class="tray w24"><svg width="16" height="14" viewBox="0 0 16 14"><path d="M1 5h2l4-4v12l-4-4H1z" fill="none" stroke="#ddd"/><path d="M10 4c1.500 2 1.500 4 0 6M12.500 2.500c2.500 3 2.500 6 0 9" fill="none" stroke="#ddd"/></svg></span>
  <span class="tray w24"><svg width="16" height="14" viewBox="0 0 16 14"><path d="M1 13C2 7 7 2 14 1M5 13c1-4 4-7 9-8M9 13c.5-2 2-3.500 5-4" fill="none" stroke="#999" stroke-width="1.200"/><circle cx="13" cy="12" r="1.500" fill="#ddd"/></svg></span>
  <span class="clock"><span>8:50</span><span>22/07/2019</span></span>
  <span class="notif"><svg width="30" height="30" viewBox="0 0 30 30"><path d="M3 2h17v14H11l-4 4v-4H3z" fill="#fff"/><path d="M6 6h11M6 9h11M6 12h8" stroke="#1c1c1c"/><circle cx="19" cy="19" r="8" fill="#404040" stroke="#777"/><text class="badge" x="19" y="23">6</text></svg></span>
</div>
</body>
</html>
```

FILE: styles.css
```css
* { box-sizing: border-box; }
html, body { margin: 0; padding: 0; }
body { width: 1280px; height: 768px; overflow: hidden; font-family: "Noto Sans", "Liberation Sans", sans-serif; font-size: 11px; color: #222; background: #fff; }
.defs { position: absolute; }

.window { height: 727px; display: flex; flex-direction: column; border-style: solid; border-color: #f8a21f; border-width: 0 4px 3px 5px; background: #fff; }

.titlebar { height: 25px; margin: 0 -4px 0 -5px; padding: 0 6px 0 5px; display: flex; align-items: center; background: linear-gradient(#f39a1e 0, #fca62f 2px, #ffb948 23px, #f09a20 25px); color: #fff; font-family: "DejaVu Sans", sans-serif; font-weight: bold; }
.ti-logo { margin-top: 2px; }
.ti-caret { margin-left: 4px; border: 3.500px solid transparent; border-top: 4px solid #fff; border-bottom: 0; }
.ti-name { margin-left: 3px; width: 38px; font-size: 10.500px; color: #fff4e0; }
.ti-info { width: 12px; height: 14px; background: #fff; border: 1px solid #ddd; color: #7d93ad; text-align: center; font-size: 11px; line-height: 12px; }
.ti-price { margin-left: 9px; width: 107px; height: 16px; background: #d22e32; text-align: center; font-size: 10.500px; line-height: 16px; white-space: nowrap; }
.ti-text { margin-left: 5px; font-size: 10.200px; color: #fff4e0; white-space: nowrap; }
.ti-right { margin-left: auto; display: flex; gap: 4px; align-items: center; }

.toolbar { height: 33px; flex: none; padding: 3px 0 0 5px; display: flex; align-items: flex-start; background: #fff; }
.tool { width: 26px; height: 26px; flex: none; display: block; }
.tool svg { display: block; width: 26px; height: 26px; }
.tool.sel { background: #d9d9d9; }
.bx { fill: none; stroke: #1a2ccc; stroke-width: 1.100; }
.ti-t { font-family: "Liberation Serif", serif; font-weight: bold; font-size: 14px; text-anchor: middle; fill: #111; }

.palette { margin: 3px 0 0 3px; width: 154px; flex: none; display: flex; flex-direction: column; gap: 1px; }
.pal-row { display: flex; height: 10px; }
.pal-top { margin-left: 10px; }
.pal-row i { width: 11px; height: 10px; border-radius: 3px; display: block; box-shadow: inset 0 0 2px rgba(255,255,255,.6); }
.c1 { background: #d4d4d4; } .c2 { background: #bcbcbc; } .c3 { background: #9c9c9c; } .c4 { background: #7a7a7a; }
.pal-row i.c5 { background: #000; position: relative; margin: -2px -1px 0; width: 13px; height: 14px; box-shadow: 0 0 0 1px #999; }
.c6 { background: #bccaf6; } .c7 { background: #6f9cf0; } .c8 { background: #4fc1f5; } .c9 { background: #0000dc; } .c10 { background: #3a3ab4; } .c11 { background: #000080; } .c12 { background: #7a10b0; } .c13 { background: #e050c8; }
.d1 { background: #e88080; } .d2 { background: #f40000; } .d3 { background: #e03038; } .d4 { background: #8a4a10; } .d5 { background: #f89060; } .d6 { background: #f89a90; } .d7 { background: #f8c850; } .d8 { background: #f8f800; } .d9 { background: #60f0c0; } .d10 { background: #80f890; } .d11 { background: #00e000; } .d12 { background: #50c860; } .d13 { background: #289848; } .d14 { background: #006810; }

.select { margin-top: 2px; height: 22px; display: flex; align-items: center; justify-content: space-between; padding: 0 5px 0 4px; border: 1px solid #bcbcbc; border-radius: 3px; background: linear-gradient(#fff, #f7f7f7); font-size: 10.500px; color: #222; flex: none; }
.select b, .indic-btn b { width: 0; height: 0; border: 4px solid transparent; border-top: 5px solid #111; border-bottom: 0; }
.sel-units { margin-left: 76px; width: 99px; }
.sel-time { margin-left: 103px; width: 128px; }
.indic-btn { margin: -1px 0 0 102px; width: 49px; height: 28px; flex: none; display: flex; align-items: center; border: 1px solid #c4c4c4; border-radius: 3px; background: #f2f2f2; }
.indic-btn svg { background: #f7f7f7; border-right: 1px solid #ccc; width: 36px; height: 26px; }
.indic-btn b { margin-left: 3px; }

.panes { position: relative; display: flex; flex-direction: column; }
.pane { display: block; flex: none; overflow: visible; }
.pane + .pane { margin-top: 2px; }
.pane:nth-child(3) { margin-top: 2px; }
.pane:nth-child(4) { margin-top: 3px; }
.pane:nth-child(5) { margin-top: 0; }

.plot { fill: #e9effd; stroke: #bdbdbd; }
.plot.white { fill: #fff; }
.wick-d, .wick-u { fill: none; shape-rendering: crispEdges; }
.wick-d { stroke: #a13244; }
.wick-u { stroke: #228a36; }
.bars rect { shape-rendering: crispEdges; }
.up { stroke: #228a36; }
.dn { stroke: #a13244; }
.dash { fill: none; stroke: #dc8c98; stroke-width: 1.200; stroke-dasharray: 5 4; }
.thin-red { fill: none; stroke: #d81c1c; shape-rendering: crispEdges; }
.red-thick { fill: none; stroke: #f40808; shape-rendering: crispEdges; }
.r3 { stroke-width: 3; }
.r4 { stroke-width: 4; }
.thin-blk { fill: none; stroke: #1a1a22; stroke-width: 1.200; }
.crisp { shape-rendering: crispEdges; stroke-width: 1; }
.thin-red2 { fill: none; stroke: #e8303c; stroke-width: 1.200; }
.lb { font-size: 9.500px; fill: #222; font-family: "Noto Sans", sans-serif; }
.ft { font-size: 10.500px; fill: #222; }
.it { font-size: 11px; font-style: italic; }
.tk { fill: none; stroke: #aaa; shape-rendering: crispEdges; }
.tk-red { fill: none; stroke: #d86070; shape-rendering: crispEdges; }
.tk-dk { fill: none; stroke: #444; shape-rendering: crispEdges; }
.ax { font-size: 11px; fill: #222; font-family: "Noto Sans", sans-serif; }
.ax-b { font-size: 11.500px; font-weight: bold; fill: #111; font-family: "DejaVu Sans", sans-serif; }
.rd { fill: #d87c84; }
.gn { fill: #86d090; }
.bl { fill: #3c3cc0; }
.box-r { fill: #f6f0f0; stroke: #c8c8c8; shape-rendering: crispEdges; }
.box-g { fill: #f2f2f2; stroke: #c8c8c8; shape-rendering: crispEdges; }
.box-gr { fill: #f4f8f4; stroke: #c8c8c8; shape-rendering: crispEdges; }
.box-b { fill: #f4f4fa; stroke: #c8c8c8; shape-rendering: crispEdges; }
.box-y { fill: #f2c410; }
.f-blue { fill: #adb0da; }
.f-pink { fill: #f2cccc; }
.f-green { fill: #bfe8c4; }
.f-salmon { fill: #f2b8b8; }
.h-blue { fill: none; stroke: #34309c; shape-rendering: crispEdges; }
.h-green { fill: none; stroke: #1c7a30; shape-rendering: crispEdges; }
.h-purple { fill: none; stroke: #8c1c68; stroke-width: 2; shape-rendering: crispEdges; }
.k-line { fill: none; stroke: #111; stroke-width: 1.200; }
.d-line { fill: none; stroke: #b08088; stroke-dasharray: 3 2; }
.sig { fill: none; stroke: #b08a60; }
.sig2 { fill: none; stroke: #e07880; }
.macd { fill: none; stroke: #4444cc; stroke-width: 1.200; }
.tm text { font-size: 11px; text-anchor: middle; fill: #333; }
.tmb text { font-size: 11.500px; font-weight: bold; text-anchor: middle; fill: #111; font-family: "DejaVu Sans", sans-serif; }

.overlays { position: absolute; left: 0; top: 0; width: 0; height: 0; }
.plabel { position: absolute; left: 0; height: 17px; padding: 0 0 1px 2px; display: flex; align-items: center; background: #fff; border: 1px solid #ccc; border-width: 0 1px 1px 0; font-size: 10.500px; color: #222; white-space: nowrap; }
.pl-price { top: 1px; width: 143px; }
.pl-vol { top: 381px; width: 97px; }
.pl-sto { top: 415px; width: 152px; }
.pl-mac { top: 538px; width: 133px; }
.wr { width: 15px; height: 15px; margin-left: 3px; flex: none; }
.win { width: 14px; height: 14px; margin-left: 2px; flex: none; border: 1px solid #111; border-top-width: 3px; background: #fff; border-radius: 1px; }
.cl { width: 14px; height: 14px; margin-left: 3px; flex: none; border-radius: 50%; background: #444; color: #fff; font: bold 13px/13px "DejaVu Sans", sans-serif; text-align: center; }
.gr { width: 13px; height: 13px; margin-left: 3px; flex: none; background: #cfcfcf; border: 1px solid #bbb; color: #fff; font: bold 12px/11px "DejaVu Sans", sans-serif; text-align: center; }
.gp { width: 16px; height: 15px; margin-left: 5px; flex: none; }

.footer { flex: 1; display: flex; align-items: center; padding-top: 1px; position: relative; background: #fff; }
.share { width: 73px; height: 23px; flex: none; display: flex; align-items: center; gap: 3px; padding-left: 3px; background: #2f90da; border-radius: 3px; color: #fff; font-size: 10.500px; }
.fi-link { margin-left: 4px; flex: none; }
.fi-doc { margin-left: 8px; flex: none; }
.scroll { margin-left: 8px; width: 1025px; height: 16px; flex: none; display: flex; border: 1px solid #d0d0d0; border-radius: 3px; background: #fff; }
.sb-btn { width: 14px; flex: none; display: flex; align-items: center; justify-content: center; background: #fafafa; border: 1px solid #d0d0d0; border-width: 0 1px; }
.sb-track { flex: 1; }
.sb-thumb { width: 86px; flex: none; text-align: center; border: 1px solid #d8d8d8; border-radius: 3px; background: #fff; color: #bbb; line-height: 14px; }
.sb-thumb i { font-style: normal; }
.tri-l { border: 3.500px solid transparent; border-right: 4px solid #111; border-left: 0; }
.tri-r { border: 3.500px solid transparent; border-left: 4px solid #111; border-right: 0; }
.fi-c { margin-left: 7px; flex: none; }
.fi-m { margin-left: 11px; flex: none; }
.fi-z { margin-left: 8px; flex: none; }
.fi-z2 { margin-left: 9px; flex: none; }

.taskbar { height: 41px; display: flex; align-items: stretch; background: #1a1a1a; color: #e6e6e6; font-family: "Open Sans", "Noto Sans", sans-serif; font-size: 11.250px; }
.tb { display: flex; align-items: center; justify-content: center; flex: none; }
.w48 { width: 48px; } .w46 { width: 46px; } .w44 { width: 44px; }
.task { display: flex; align-items: center; gap: 5px; padding-left: 3px; border-bottom: 2px solid #6aa8e0; flex: none; white-space: nowrap; }
.w91 { width: 91px; } .w90 { width: 90px; } .w98 { width: 98px; }
.m2 { margin-left: 2px; } .m4 { margin-left: 4px; } .m5 { margin-left: 5px; } .m7 { margin-left: 7px; } .m8 { margin-left: 8px; }
.mail { gap: 1px; }
.mail-ic { margin-top: 6px; }
.tc { margin-left: 3px; flex: none; }
.active { background: #3c3c3c; padding-left: 6px; }
.badge { fill: #fff; font-size: 11px; font-weight: bold; text-anchor: middle; font-family: "Noto Sans", sans-serif; }
.xw { fill: #fff; font-size: 12px; font-weight: bold; font-family: "Noto Sans", sans-serif; }
.tray { display: flex; align-items: center; justify-content: center; flex: none; }
.people { width: 38px; margin-left: 12px; }
.w24 { width: 24px; } .w26 { width: 26px; } .w22 { width: 22px; }
.ml6 { margin-left: 6px; }
.clock { width: 70px; flex: none; display: flex; flex-direction: column; align-items: center; justify-content: center; line-height: 18px; }
.notif { width: 44px; flex: none; display: flex; align-items: center; justify-content: center; }
```
